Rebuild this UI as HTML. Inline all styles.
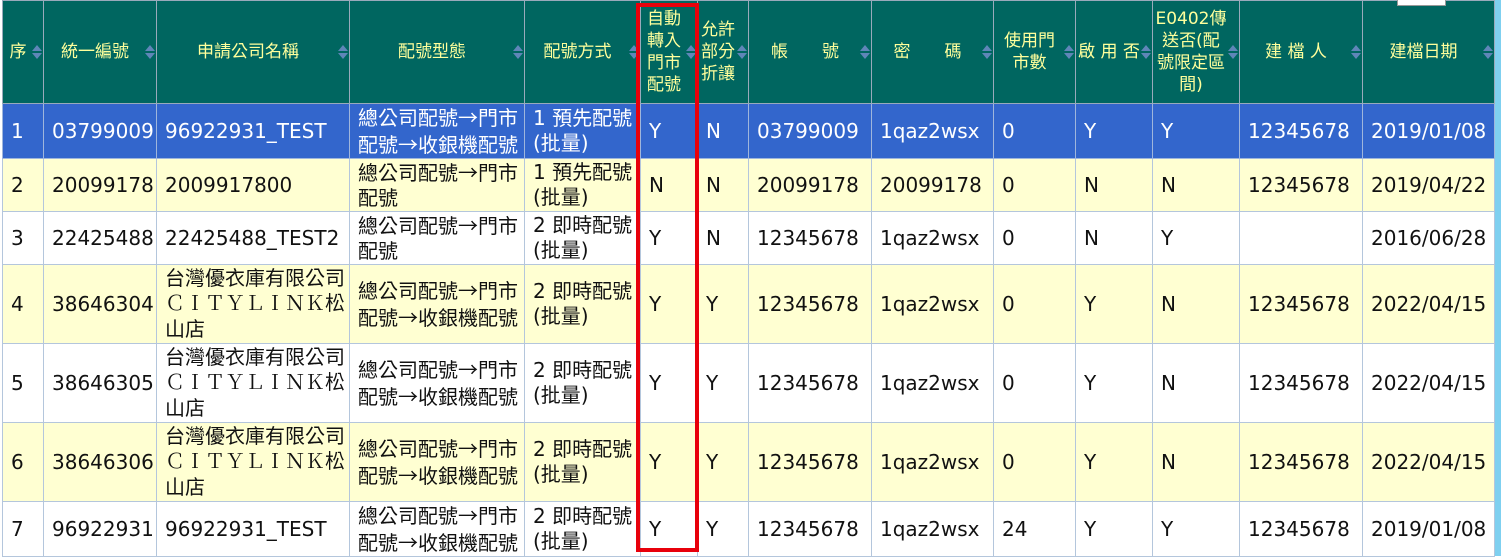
<!DOCTYPE html>
<html><head><meta charset="utf-8"><style>
body{margin:0;width:1501px;height:556px;overflow:hidden;background:#fff;position:relative;font-family:"DejaVu Sans","Noto Sans CJK TC",sans-serif;}
table{position:absolute;left:2px;top:0;border-collapse:collapse;table-layout:fixed;width:1492px;}
td,th{border:1px solid #b4c6dc;padding:0 0 0 8px;font-size:20px;line-height:25px;vertical-align:middle;text-align:left;white-space:nowrap;overflow:hidden;color:#111;}
th{background:#006660;color:#ffff9c;font-weight:normal;font-size:17px;line-height:22px;text-align:center;padding:0 10px 0 0;position:relative;border-color:#9ab}
th .s{position:absolute;right:1px;top:44px;width:0;height:0;border-left:5px solid transparent;border-right:5px solid transparent;border-bottom:6px solid #5f86b8}
th .s:after{content:"";position:absolute;left:-5px;top:8px;border-left:5px solid transparent;border-right:5px solid transparent;border-top:6px solid #5f86b8}
tr.sel td{background:#3366cc;color:#fff;border-color:#9fb6dc}
tr.y td{background:#ffffd2}
.ms{font-family:"Liberation Serif","Noto Serif CJK SC",serif}
.a{font-family:"Noto Sans CJK TC",sans-serif}
#red{position:absolute;left:636px;top:3px;width:55px;height:541px;border:4px solid #e8000b}
#rs{position:absolute;left:1494px;top:0;width:7px;height:556px;background:#7fd0f0}
</style></head><body>
<div id="rs"></div>
<table>
<colgroup><col style="width:41px"><col style="width:113px"><col style="width:193px"><col style="width:175px"><col style="width:116px"><col style="width:57px"><col style="width:51px"><col style="width:123px"><col style="width:122px"><col style="width:82px"><col style="width:77px"><col style="width:87px"><col style="width:123px"><col style="width:132px"></colgroup>
<tr style="height:103px">
<th>序<span class="s"></span></th><th>統一編號<span class="s"></span></th><th>申請公司名稱<span class="s"></span></th><th>配號型態<span class="s"></span></th><th>配號方式<span class="s"></span></th><th>自動<br>轉入<br>門市<br>配號<span class="s"></span></th><th>允許<br>部分<br>折讓<span class="s"></span></th><th>帳　　號<span class="s"></span></th><th>密　　碼<span class="s"></span></th><th>使用門<br>市數<span class="s"></span></th><th>啟 用 否<span class="s"></span></th><th>E0402傳<br>送否(配<br>號限定區<br>間)<span class="s"></span></th><th>建 檔 人<span class="s"></span></th><th>建檔日期<span class="s"></span></th></tr>
<tr class="sel" style="height:53px"><td>1</td><td>03799009</td><td>96922931_TEST</td><td>總公司配號<span class="a">→</span>門市<br>配號<span class="a">→</span>收銀機配號</td><td>1 預先配號<br>(批量)</td><td>Y</td><td>N</td><td>03799009</td><td>1qaz2wsx</td><td>0</td><td>Y</td><td>Y</td><td>12345678</td><td>2019/01/08</td></tr>
<tr class="y" style="height:53px"><td>2</td><td>20099178</td><td>2009917800</td><td>總公司配號<span class="a">→</span>門市<br>配號</td><td>1 預先配號<br>(批量)</td><td>N</td><td>N</td><td>20099178</td><td>20099178</td><td>0</td><td>N</td><td>N</td><td>12345678</td><td>2019/04/22</td></tr>
<tr style="height:53px"><td>3</td><td>22425488</td><td>22425488_TEST2</td><td>總公司配號<span class="a">→</span>門市<br>配號</td><td>2 即時配號<br>(批量)</td><td>Y</td><td>N</td><td>12345678</td><td>1qaz2wsx</td><td>0</td><td>N</td><td>Y</td><td></td><td>2016/06/28</td></tr>
<tr class="y" style="height:79px"><td>4</td><td>38646304</td><td>台灣優衣庫有限公司<br><span class="ms">ＣＩＴＹＬＩＮＫ</span>松<br>山店</td><td>總公司配號<span class="a">→</span>門市<br>配號<span class="a">→</span>收銀機配號</td><td>2 即時配號<br>(批量)</td><td>Y</td><td>Y</td><td>12345678</td><td>1qaz2wsx</td><td>0</td><td>Y</td><td>N</td><td>12345678</td><td>2022/04/15</td></tr>
<tr style="height:79px"><td>5</td><td>38646305</td><td>台灣優衣庫有限公司<br><span class="ms">ＣＩＴＹＬＩＮＫ</span>松<br>山店</td><td>總公司配號<span class="a">→</span>門市<br>配號<span class="a">→</span>收銀機配號</td><td>2 即時配號<br>(批量)</td><td>Y</td><td>Y</td><td>12345678</td><td>1qaz2wsx</td><td>0</td><td>Y</td><td>N</td><td>12345678</td><td>2022/04/15</td></tr>
<tr class="y" style="height:79px"><td>6</td><td>38646306</td><td>台灣優衣庫有限公司<br><span class="ms">ＣＩＴＹＬＩＮＫ</span>松<br>山店</td><td>總公司配號<span class="a">→</span>門市<br>配號<span class="a">→</span>收銀機配號</td><td>2 即時配號<br>(批量)</td><td>Y</td><td>Y</td><td>12345678</td><td>1qaz2wsx</td><td>0</td><td>Y</td><td>N</td><td>12345678</td><td>2022/04/15</td></tr>
<tr style="height:53px"><td>7</td><td>96922931</td><td>96922931_TEST</td><td>總公司配號<span class="a">→</span>門市<br>配號<span class="a">→</span>收銀機配號</td><td>2 即時配號<br>(批量)</td><td>Y</td><td>Y</td><td>12345678</td><td>1qaz2wsx</td><td>24</td><td>Y</td><td>Y</td><td>12345678</td><td>2019/01/08</td></tr>
</table>
<div id="red"></div>
<div style="position:absolute;left:1397px;top:0;width:47px;height:5px;background:#fff;border:1px solid #999;border-top:none"></div>
</body></html>
